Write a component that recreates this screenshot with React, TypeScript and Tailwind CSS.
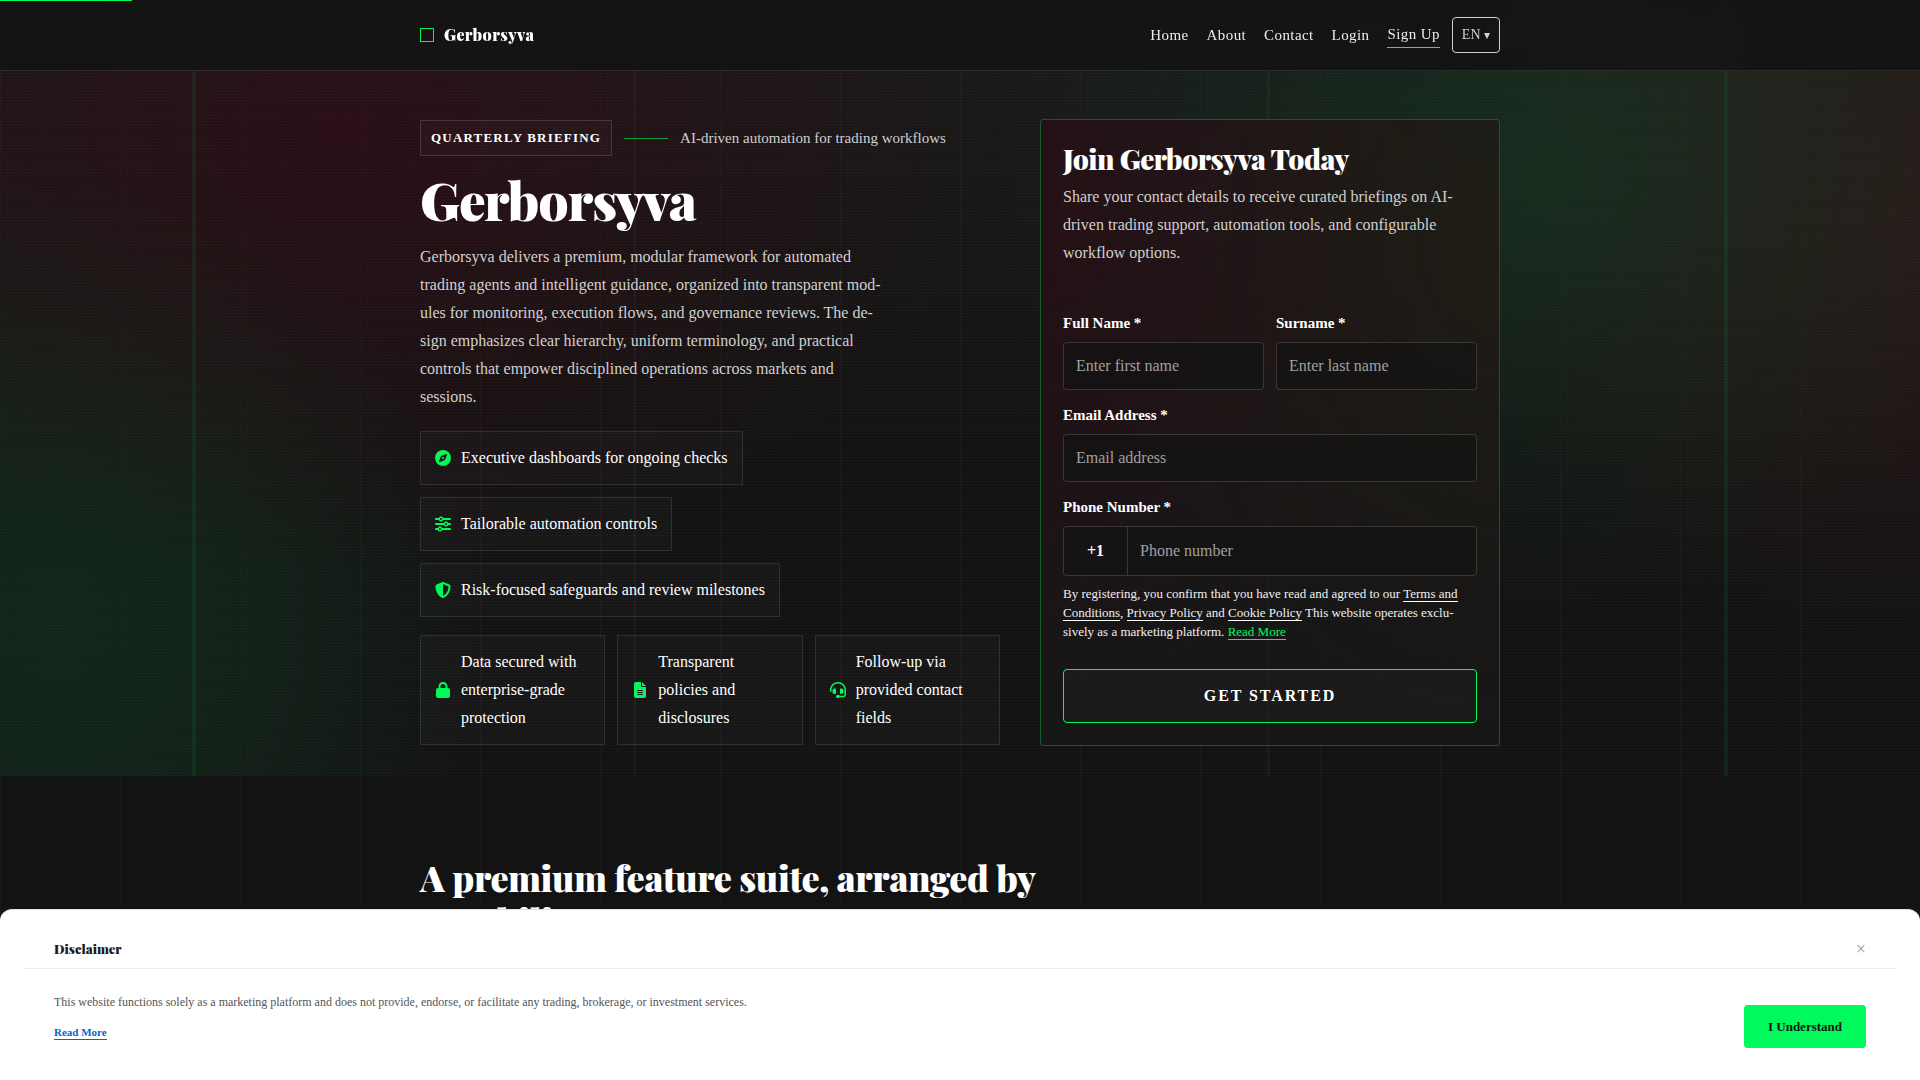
import type { ReactNode } from "react";
import {
  FaCompass,
  FaFileLines,
  FaHeadset,
  FaLock,
  FaShieldHalved,
  FaSliders,
} from "react-icons/fa6";

const navLinks = ["Home", "About", "Contact", "Login"];

const highlights = [
  { icon: <FaCompass />, text: "Executive dashboards for ongoing checks" },
  { icon: <FaSliders />, text: "Tailorable automation controls" },
  { icon: <FaShieldHalved />, text: "Risk-focused safeguards and review milestones" },
];

const assurances = [
  { icon: <FaLock />, text: "Data secured with enterprise-grade protection" },
  { icon: <FaFileLines />, text: "Transparent policies and disclosures" },
  { icon: <FaHeadset />, text: "Follow-up via provided contact fields" },
];

function Chip({ icon, children }: { icon: ReactNode; children: ReactNode }) {
  return (
    <li className="flex items-center gap-[10px] border border-white/10 bg-white/[0.02] px-[14px] py-3 text-base leading-7 text-white">
      <span className="flex w-4 shrink-0 justify-center text-base text-[#00f95b]">{icon}</span>
      <span>{children}</span>
    </li>
  );
}

function Field({ id, label, type, placeholder }: { id: string; label: string; type: string; placeholder: string }) {
  return (
    <div className="flex flex-col gap-[6px]">
      <label htmlFor={id} className="text-[15px] leading-[26px] font-bold text-white">
        {label}
      </label>
      <input
        id={id}
        type={type}
        placeholder={placeholder}
        className="h-12 w-full rounded-[4px] border border-white/15 bg-[#131313]/70 px-3 text-base text-white outline-none placeholder:text-[#a0a0a0]"
      />
    </div>
  );
}

function Header() {
  return (
    <header className="fixed inset-x-0 top-0 z-20 border-b border-white/10 bg-[#131313]/92 backdrop-blur-md">
      <div className="absolute top-0 left-0 h-px w-[132px] bg-[#00f95b]" />
      <div className="mx-auto flex h-[70px] max-w-[1080px] items-center justify-between">
        <a href="#" className="flex items-center gap-[10px]">
          <span className="size-[14px] border border-[#00f95b]" />
          <span className="font-['Playfair_Display','Liberation_Serif',serif] text-base font-black tracking-wide text-white">
            Gerborsyva
          </span>
        </a>
        <nav className="flex items-center gap-[18px] text-[15px] leading-6 tracking-[0.4px] text-[#ececec]">
          {navLinks.map((link) => (
            <a key={link} href="#">
              {link}
            </a>
          ))}
          <a href="#" className="border-b border-[#00f95b] pb-px">
            Sign Up
          </a>
          <button type="button" className="-ml-[6px] h-9 rounded-[4px] border border-[#d0d0d0] px-[9px] text-sm tracking-normal text-[#d0d0d0]">
            EN <span className="text-xs">▾</span>
          </button>
        </nav>
      </div>
    </header>
  );
}

function SignupCard() {
  return (
    <section className="rounded-[4px] border border-[#00f95b]/30 bg-[#181818]/75 bg-[radial-gradient(ellipse_90%_80%_at_0%_15%,rgba(60,4,20,0.38),transparent),radial-gradient(ellipse_80%_80%_at_100%_20%,rgba(50,30,14,0.32),transparent)] px-[22px] pt-5 pb-[22px]">
      <h2 className="mb-[6px] font-['Playfair_Display','Liberation_Serif',serif] text-[28px] leading-[37px] font-black tracking-[-0.02em] text-white">
        Join Gerborsyva Today
      </h2>
      <p className="text-base leading-7 text-[#d0d0d0]">
        Share your contact details to receive curated briefings on AI-driven trading support, automation tools, and
        configurable workflow options.
      </p>
      <form className="mt-[43px] flex flex-col gap-3">
        <div className="grid grid-cols-2 gap-3">
          <Field id="first-name" label="Full Name *" type="text" placeholder="Enter first name" />
          <Field id="last-name" label="Surname *" type="text" placeholder="Enter last name" />
        </div>
        <Field id="email" label="Email Address *" type="email" placeholder="Email address" />
        <div className="flex flex-col gap-[6px]">
          <label htmlFor="phone" className="text-[15px] leading-[26px] font-bold text-white">
            Phone Number *
          </label>
          <div className="flex h-[50px] rounded-[4px] border border-white/15 bg-[#131313]/70">
            <span className="flex w-16 items-center justify-center border-r border-white/15 font-bold text-white">+1</span>
            <input
              id="phone"
              type="tel"
              placeholder="Phone number"
              className="min-w-0 flex-1 px-3 text-base text-white outline-none placeholder:text-[#a0a0a0]"
            />
          </div>
        </div>
        <p className="-mt-1 text-[13px] leading-[19px] text-[#f0f0f0]">
          By registering, you confirm that you have read and agreed to our{" "}
          <a href="#" className="border-b border-white">Terms and Conditions</a>,{" "}
          <a href="#" className="border-b border-white">Privacy Policy</a> and{" "}
          <a href="#" className="border-b border-white">Cookie Policy</a> This website operates exclu&shy;sively as a
          marketing platform.{" "}
          <a href="#" className="border-b border-[#00f95b] text-[#00f95b]">Read More</a>
        </p>
        <button
          type="submit"
          className="mt-4 h-[54px] rounded-[4px] border border-[#00f95b] bg-white/[0.02] text-base font-bold tracking-[0.12em] text-white"
        >
          GET STARTED
        </button>
      </form>
    </section>
  );
}

function Disclaimer() {
  return (
    <aside className="fixed inset-x-0 bottom-0 z-30 rounded-t-xl border-t border-[#e0e0e0] bg-white px-6 pb-8">
      <div className="flex h-[59px] items-center justify-between border-b border-[#ececec] px-[30px] pt-5">
        <h2 className="font-['Playfair_Display','Liberation_Serif',serif] text-[13px] font-black text-[#1a1a1a]">
          Disclaimer
        </h2>
        <button type="button" aria-label="Close" className="text-lg leading-5 text-[#999]">
          ×
        </button>
      </div>
      <div className="flex items-start justify-between px-[30px] pt-6">
        <div className="flex flex-col items-start gap-[14px]">
          <p className="text-xs leading-[18px] text-[#555]">
            This website functions solely as a marketing platform and does not provide, endorse, or facilitate any
            trading, brokerage, or investment services.
          </p>
          <a href="#" className="border-b border-[#0066cc] text-[11px] leading-[14px] font-bold text-[#0066cc]">
            Read More
          </a>
        </div>
        <button type="button" className="mt-3 h-[43px] rounded-[4px] bg-[#00f95b] px-6 text-[13px] font-bold text-[#131313]">
          I Understand
        </button>
      </div>
    </aside>
  );
}

// Decorative layers behind the hero: colour glows, scan lines and vertical rails
function HeroBackdrop() {
  return (
    <div aria-hidden="true" className="absolute inset-0 -z-10">
      <div className="absolute inset-0 bg-[radial-gradient(ellipse_36%_58%_at_18%_17%,rgba(64,2,18,0.44),rgba(64,4,18,0.2)_50%,transparent),radial-gradient(ellipse_22%_58%_at_3%_80%,rgba(16,64,36,0.44),rgba(16,64,36,0.32)_45%,transparent),radial-gradient(ellipse_28%_56%_at_80%_22%,rgba(16,68,36,0.46),rgba(16,68,36,0.24)_45%,transparent),radial-gradient(ellipse_26%_55%_at_100%_28%,rgba(76,26,28,0.36),rgba(76,26,28,0.2)_50%,transparent),linear-gradient(180deg,rgba(255,255,255,0.03),transparent_60%)]" />
      <div className="absolute inset-0 bg-[repeating-linear-gradient(0deg,rgba(255,255,255,0.016)_0px,rgba(255,255,255,0.016)_1px,transparent_1px,transparent_3px)]" />
      <div className="absolute inset-y-0 left-[10%] w-1 bg-[#00f95b]/[0.07]" />
      <div className="absolute inset-y-0 left-[33%] w-0.5 bg-white/[0.03]" />
      <div className="absolute inset-y-0 left-[66%] w-[3px] bg-white/[0.03]" />
      <div className="absolute inset-y-0 right-[10%] w-1 bg-[#00f95b]/[0.07]" />
    </div>
  );
}

export default function App() {
  return (
    <div className="min-h-screen bg-[#131313] bg-[repeating-linear-gradient(90deg,rgba(255,255,255,0.025)_0px,rgba(255,255,255,0.025)_1px,transparent_1px,transparent_120px)] font-['Liberation_Serif',serif]">
      <Header />
      <main>
        <div className="relative isolate pt-[119px] pb-[30px]">
          <HeroBackdrop />
          <div className="mx-auto grid max-w-[1080px] grid-cols-[580fr_460fr] items-center gap-10">
            <section>
              <div className="flex items-center gap-3">
                <span className="border border-white/15 bg-white/[0.02] px-[10px] py-1 text-[13px] leading-[26px] font-bold tracking-[1.2px] text-white">
                  QUARTERLY BRIEFING
                </span>
                <span className="h-px w-11 bg-[#00f95b]/60" />
                <span className="text-[15px] text-[#d0d0d0]">AI-driven automation for trading workflows</span>
              </div>
              <h1 className="mt-3 font-['Playfair_Display','Liberation_Serif',serif] text-[53px] leading-[62px] font-black tracking-[-0.02em] text-white">
                Gerborsyva
              </h1>
              <p className="mt-[13px] max-w-[470px] text-base leading-7 text-[#d0d0d0]">
                Gerborsyva delivers a premium, modular framework for automated trading agents and intelligent guidance,
                organized into transparent mod&shy;ules for monitoring, execution flows, and governance reviews. The
                de&shy;sign emphasizes clear hierarchy, uniform terminology, and practical controls that empower
                disciplined operations across markets and sessions.
              </p>
              <ul className="mt-5 flex flex-col items-start gap-3">
                {highlights.map((item) => (
                  <Chip key={item.text} icon={item.icon}>{item.text}</Chip>
                ))}
              </ul>
              <ul className="mt-[18px] grid grid-cols-3 gap-3">
                {assurances.map((item) => (
                  <Chip key={item.text} icon={item.icon}>{item.text}</Chip>
                ))}
              </ul>
            </section>
            <SignupCard />
          </div>
        </div>
        <section className="mx-auto max-w-[1080px] pt-20">
          <h2 className="max-w-[640px] font-['Playfair_Display','Liberation_Serif',serif] text-[36px] leading-[43px] font-black tracking-[-0.01em] text-white">
            A premium feature suite, arranged by capability
          </h2>
        </section>
      </main>
      <Disclaimer />
    </div>
  );
}
